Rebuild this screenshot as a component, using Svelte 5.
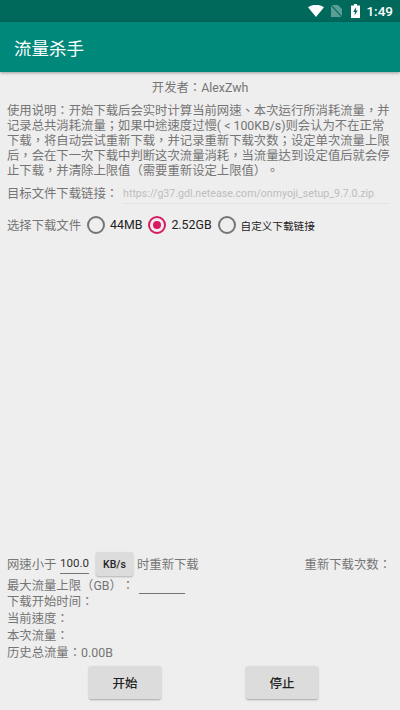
<script>
    let picked = $state('2.52GB');
    const files = ['44MB', '2.52GB'];
</script>

<div class="phone">
    <div class="status">
        <svg class="wifi" width="16" height="12" viewBox="0 0 16 12"><path d="M0 2.2 Q8 -2.6 16 2.2 L8 12 Z" fill="#fff"/></svg>
        <svg class="nosim" width="11" height="12" viewBox="0 0 11 12"><path d="M0 0 H7 L11 4 V12 H0 Z" fill="#fff" opacity=".35"/><path d="M0 0 L11 12" stroke="#00695c" stroke-width="1.1"/></svg>
        <svg class="batt" width="9" height="14" viewBox="0 0 9 14"><path d="M3 0 H6 V1.5 H9 V14 H0 V1.5 H3 Z" fill="#fff"/><path d="M5.2 3 L2.2 8 H4 L3.4 11.6 L6.8 6.4 H4.9 Z" fill="#00695c"/></svg>
        <span class="clock">1:49</span>
    </div>
    <div class="appbar">流量杀手</div>

    <main>
        <p class="dev">开发者：AlexZwh</p>
        <p class="intro">使用说明：开始下载后会实时计算当前网速、本次运行所消耗流量，并记录总共消耗流量；如果中途速度过慢( &lt; 100KB/s)则会认为不在正常下载，将自动尝试重新下载，并记录重新下载次数；设定单次流量上限后，会在下一次下载中判断这次流量消耗，当流量达到设定值后就会停止下载，并清除上限值（需要重新设定上限值）。</p>

        <div class="link-row">
            <span class="label">目标文件下载链接：</span>
            <span class="link">https://g37.gdl.netease.com/onmyoji_setup_9.7.0.zip</span>
        </div>

        <div class="pick-row">
            <span class="label">选择下载文件</span>
            {#each files as f}
                <button class="radio" class:on={picked === f} onclick={() => (picked = f)}><i></i><span>{f}</span></button>
            {/each}
            <button class="radio small" class:on={picked === 'custom'} onclick={() => (picked = 'custom')}><i></i><span>自定义下载链接</span></button>
        </div>

        <div class="spacer"></div>

        <div class="speed-row">
            <span class="label">网速小于</span>
            <span class="field speed">100.0</span>
            <span class="unit">KB/s</span>
            <span class="label">时重新下载</span>
            <span class="label retry">重新下载次数：</span>
        </div>
        <div class="limit-row">
            <span class="label">最大流量上限（GB）：</span>
            <span class="field limit"></span>
        </div>
        <div class="stat">下载开始时间：</div>
        <div class="stat">当前速度：</div>
        <div class="stat">本次流量：</div>
        <div class="stat">历史总流量：0.00B</div>

        <div class="actions">
            <button class="btn">开始</button>
            <button class="btn">停止</button>
        </div>
    </main>
</div>

<style>
    :global(body) {
        margin: 0;
        background: #eeeeee;
    }
    .phone {
        width: 400px;
        height: 710px;
        display: flex;
        flex-direction: column;
        overflow: hidden;
        font-family: Roboto, "Noto Sans CJK TC", sans-serif;
        font-size: 12.35px;
        color: #757575;
        text-spacing-trim: space-all;
    }
    .status {
        height: 22px;
        flex: none;
        background: #00695c;
        display: flex;
        align-items: center;
        justify-content: flex-end;
        padding-right: 7px;
        color: #fff;
    }
    .wifi { margin-right: 7px; }
    .nosim { margin-right: 9px; }
    .batt { margin-right: 6px; }
    .clock {
        font-size: 13.5px;
        font-weight: 500;
    }
    .appbar {
        height: 50px;
        flex: none;
        background: #00897b;
        color: #fff;
        font-size: 17.5px;
        display: flex;
        align-items: center;
        padding-left: 14px;
        box-shadow: 0 1px 3px rgba(0, 0, 0, .35);
        position: relative;
    }
    main {
        flex: 1;
        display: flex;
        flex-direction: column;
        padding: 0 7px;
        min-height: 0;
    }
    p { margin: 0; }
    .dev {
        text-align: center;
        line-height: 16px;
        margin-top: 8px;
    }
    .intro {
        margin-top: 8px;
        line-height: 15px;
        width: 386px;
    }
    .link-row {
        display: flex;
        align-items: center;
        height: 28px;
    }
    .link {
        color: #bdbdbd;
        font-size: 10.6px;
        margin-left: 5px;
        padding: 4px 15px 3px 0;
        border-bottom: 1px solid #e4e4e4;
    }
    .pick-row {
        display: flex;
        align-items: center;
        height: 28px;
        margin-top: 4px;
    }
    .radio {
        display: flex;
        align-items: center;
        background: none;
        border: 0;
        padding: 0;
        font: inherit;
        color: #222;
        margin-left: 6px;
    }
    .radio i {
        width: 18px;
        height: 18px;
        box-sizing: border-box;
        border: 2px solid #757575;
        border-radius: 50%;
        margin-right: 5px;
        position: relative;
        flex: none;
    }
    .radio.on i { border-color: #d81b60; }
    .radio.on i::after {
        content: "";
        position: absolute;
        inset: 3px;
        border-radius: 50%;
        background: #d81b60;
    }
    .radio.small { font-size: 10.6px; }
    .spacer { flex: 1; }
    .speed-row {
        display: flex;
        align-items: center;
        height: 24px;
    }
    .field {
        display: block;
        border-bottom: 1px solid #757575;
        color: #333;
    }
    .speed {
        font-size: 11.5px;
        margin-left: 3.6px;
        padding: 2px 0 3px;
        width: 29px;
        text-align: center;
    }
    .unit {
        width: 37px;
        height: 24px;
        margin: 0 4px 0 7px;
        background: #dcdcdc;
        border-radius: 2px;
        box-shadow: 0 1px 2px rgba(0, 0, 0, .25);
        color: #222;
        font-size: 10.5px;
        font-weight: 500;
        display: flex;
        align-items: center;
        justify-content: center;
    }
    .retry { margin-left: auto; margin-right: 2px; }
    .limit-row {
        display: flex;
        align-items: center;
        height: 18px;
    }
    .limit {
        width: 46px;
        height: 17px;
        margin-left: 5px;
    }
    .stat {
        line-height: 17px;
    }
    .actions {
        display: flex;
        justify-content: space-between;
        padding: 3px 75px 0 82px;
        height: 47px;
        margin-top: 1px;
        box-sizing: border-box;
    }
    .btn {
        width: 72px;
        height: 33px;
        background: #dcdcdc;
        border: 0;
        border-radius: 2px;
        box-shadow: 0 1px 2px rgba(0, 0, 0, .3);
        font: inherit;
        font-size: 12.5px;
        font-weight: 500;
        color: #222;
    }
</style>
